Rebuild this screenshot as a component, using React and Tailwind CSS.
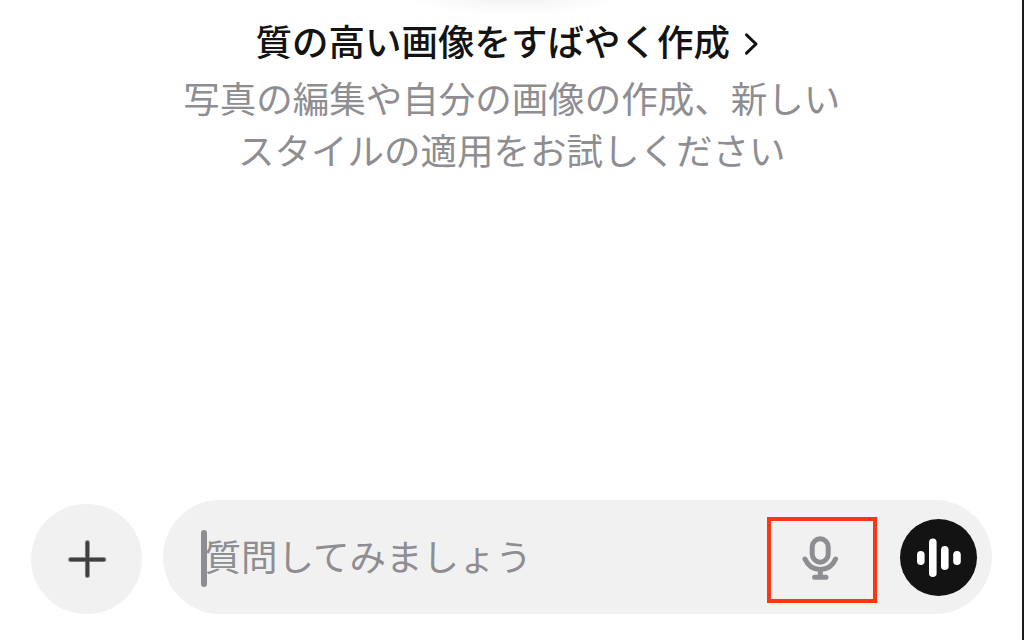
import React from "react";

const VOICE_BARS = [
  { x: 17, y: 32, h: 14 },
  { x: 29, y: 19.5, h: 38.5 },
  { x: 41, y: 27, h: 24 },
  { x: 53.2, y: 32, h: 14 },
];

function ChevronIcon() {
  return (
    <svg className="w-4 h-6 mt-[7px] shrink-0" viewBox="0 0 16 24" fill="none" stroke="currentColor" strokeWidth="3" strokeLinecap="round" strokeLinejoin="round">
      <path d="M3.5 2.8 13 12 3.5 21.2" />
    </svg>
  );
}

function PlusIcon() {
  return (
    <svg className="w-10 h-10" viewBox="0 0 40 40" fill="none" strokeLinecap="round">
      <path d="M20.4 3.6v33M3.6 20.6h33.2" stroke="#8f8f91" strokeWidth="5" />
      <path d="M20.4 3.6v33M3.6 20.6h33.2" stroke="#3f3f40" strokeWidth="3.2" />
    </svg>
  );
}

function MicIcon() {
  return (
    <svg className="w-10 h-12" viewBox="0 0 40 48" fill="none" stroke="currentColor" strokeWidth="5" strokeLinecap="round" strokeLinejoin="round">
      <rect x="12.2" y="4.8" width="16" height="23.4" rx="8" />
      <path d="M5 25C8 32 13.3 35.4 20.3 35.4S32.6 32 35.6 25" />
      <path d="M20.3 36v6M14.6 43.2h11.4" />
    </svg>
  );
}

function VoiceButton() {
  return (
    <button aria-label="音声モード" className="w-[77px] h-[77px] rounded-full bg-[#131313] shrink-0">
      <svg className="w-full h-full" viewBox="0 0 77 77" fill="#fff">
        {VOICE_BARS.map(bar => (
          <rect key={bar.x} x={bar.x} y={bar.y} width="7.6" height={bar.h} rx="3.8" />
        ))}
      </svg>
    </button>
  );
}

export default function App() {
  return (
    <div
      lang="ja"
      className="w-[1024px] h-[640px] flex overflow-hidden bg-white font-['Noto_Sans_CJK_JP',sans-serif] text-[36.5px]"
    >
      <main className="flex-1 flex flex-col justify-between bg-[radial-gradient(ellipse_110px_22px_at_514px_-6px,#f0f0f0,#ffffff)]">
        {/* Suggestion */}
        <section className="pt-[12px] flex flex-col items-center">
          <h1 className="h-[60px] pr-[7px] pb-[3px] flex items-center gap-[13px] leading-[52px] font-medium text-[#131313] whitespace-nowrap">
            質の高い画像をすばやく作成
            <ChevronIcon />
          </h1>
          <p className="pl-[2px] leading-[52px] text-center text-[#8e8e92] whitespace-nowrap">
            写真の編集や自分の画像の作成、新しい
            <br />
            スタイルの適用をお試しください
          </p>
        </section>

        {/* Composer */}
        <footer className="pl-[31px] pb-[26px] flex items-end gap-[21px]">
          <button aria-label="追加" className="w-[111px] h-[110px] rounded-full bg-[#f1f1f1] flex items-center justify-center shrink-0">
            <PlusIcon />
          </button>

          <div className="w-[829px] h-[114px] pl-[38px] pr-[15px] rounded-full bg-[#f1f1f1] text-[#8e8e92] flex items-center">
            <span className="w-[5.5px] h-[57px] mt-[3px] rounded-full bg-current shrink-0" />
            <span className="flex-1 -ml-[2px] pb-[3px] leading-[52px] whitespace-nowrap">質問してみましょう</span>
            <div className="w-[110px] h-[86px] mt-[6px] mr-[23px] pr-[5px] pb-[4px] border-4 border-[#ff3515] flex items-center justify-center shrink-0">
              <MicIcon />
            </div>
            <VoiceButton />
          </div>
        </footer>
      </main>
      <div className="w-[2.5px] bg-[#1c1c1e] shrink-0" />
    </div>
  );
}
